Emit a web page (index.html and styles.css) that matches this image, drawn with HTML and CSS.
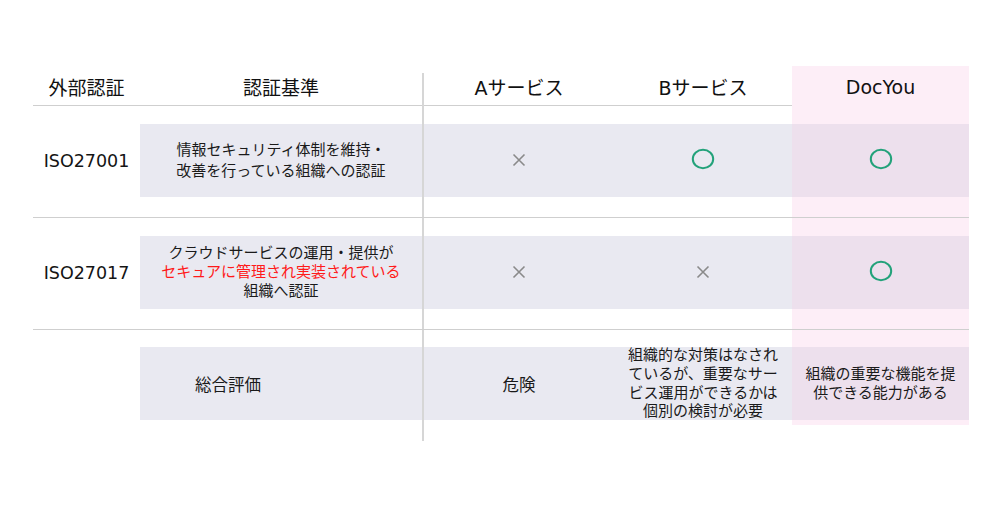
FILE: index.html
```html
<!DOCTYPE html>
<html lang="ja">
<head>
<meta charset="utf-8">
<title>認証比較</title>
<link rel="stylesheet" href="styles.css">
</head>
<body>
<div class="page">
  <div class="table">
    <div class="row head">
      <div class="cell c1"><span>外部認証</span></div>
      <div class="cell c2"><span>認証基準</span></div>
      <div class="cell c3 divider"><span>Aサービス</span></div>
      <div class="cell c4"><span>Bサービス</span></div>
      <div class="cell c5 pink"><span>DocYou</span></div>
    </div>

    <div class="row data">
      <div class="cell c1 iso">ISO27001</div>
      <div class="cell c2"><div class="band"><div class="txt lh21">情報セキュリティ体制を維持・<br>改善を行っている組織への認証</div></div></div>
      <div class="cell c3 divider"><div class="band"><svg class="cross" viewBox="0 0 14 14"><path d="M1.5 1.5 L12.5 12.5 M12.5 1.5 L1.5 12.5"/></svg></div></div>
      <div class="cell c4"><div class="band"><svg class="ok" viewBox="0 0 24 22"><ellipse cx="12" cy="11" rx="10.2" ry="9.2"/></svg></div></div>
      <div class="cell c5 pink"><div class="band mix"><svg class="ok" viewBox="0 0 24 22"><ellipse cx="12" cy="11" rx="10.2" ry="9.2"/></svg></div></div>
    </div>

    <div class="row data">
      <div class="cell c1 iso">ISO27017</div>
      <div class="cell c2"><div class="band"><div class="txt lh19">クラウドサービスの運用・提供が<br><span class="red">セキュアに管理され実装されている</span><br>組織へ認証</div></div></div>
      <div class="cell c3 divider"><div class="band"><svg class="cross" viewBox="0 0 14 14"><path d="M1.5 1.5 L12.5 12.5 M12.5 1.5 L1.5 12.5"/></svg></div></div>
      <div class="cell c4"><div class="band"><svg class="cross" viewBox="0 0 14 14"><path d="M1.5 1.5 L12.5 12.5 M12.5 1.5 L1.5 12.5"/></svg></div></div>
      <div class="cell c5 pink"><div class="band mix"><svg class="ok" viewBox="0 0 24 22"><ellipse cx="12" cy="11" rx="10.2" ry="9.2"/></svg></div></div>
    </div>

    <div class="row last">
      <div class="cell c1"></div>
      <div class="cell c2"><div class="band left"><div class="txt big">総合評価</div></div></div>
      <div class="cell c3 divider"><div class="band"><div class="txt big">危険</div></div></div>
      <div class="cell c4"><div class="band"><div class="txt lh19">組織的な対策はなされ<br>ているが、重要なサー<br>ビス運用ができるかは<br>個別の検討が必要</div></div></div>
      <div class="cell c5 pinktop"><div class="band mix"><div class="txt lh19">組織の重要な機能を提<br>供できる能力がある</div></div></div>
    </div>
  </div>
</div>
</body>
</html>
```

FILE: styles.css
```css
* { box-sizing: border-box; }

html, body {
  margin: 0;
  padding: 0;
  background: #ffffff;
}

body {
  font-family: "DejaVu Sans", "Noto Sans CJK JP", sans-serif;
  color: #1e1e1e;
  width: 1000px;
  height: 511px;
  overflow: hidden;
}

.page {
  padding: 66px 0 0 33px;
}

.table {
  width: 936px;
}

.row {
  display: grid;
  grid-template-columns: 107px 282px 192px 178px 177px;
}

.head {
  height: 40px;
  border-bottom: 1px solid #cfcfcf;
  font-size: 19px;
  color: #111;
}

.head .cell {
  display: flex;
  align-items: center;
  justify-content: center;
  padding-bottom: 5px;
}

.head .divider {
  margin-top: 7px;
  padding-bottom: 12px;
}

.data {
  height: 112px;
  border-bottom: 1px solid #cfcfcf;
}

.data .cell {
  padding: 18px 0 20px;
}

.last {
  height: 111px;
  align-items: start;
}

.last .cell {
  height: 100%;
  padding-top: 17px;
}

.last .pinktop {
  height: auto;
  padding-bottom: 5px;
  background: #fdeef7;
}

.divider {
  border-left: 2px solid #d6d6d6;
}

.pink {
  background: #fdeef7;
}

.iso {
  display: flex;
  align-items: center;
  justify-content: center;
  font-size: 17.5px;
  color: #141414;
  padding-left: 4px;
  padding-bottom: 20px;
}

.band {
  height: 73px;
  background: #e9e9f1;
  display: flex;
  align-items: center;
  justify-content: center;
}

.band.mix {
  background: #ede0ed;
}

.band.left {
  justify-content: flex-start;
  padding-left: 55px;
}

.txt {
  font-size: 15px;
  text-align: center;
  color: #1a1a1a;
  white-space: nowrap;
}

.txt.big {
  font-size: 16.5px;
}

.lh21 { line-height: 21px; }
.lh19 { line-height: 18.7px; }

.red { color: #ff1a1a; }

.cross {
  width: 14px;
  height: 14px;
  margin-bottom: 2px;
  fill: none;
  stroke: #8a8a8a;
  stroke-width: 1.6;
}

.ok {
  width: 24px;
  height: 22px;
  margin-bottom: 4px;
  fill: none;
  stroke: #23a27a;
  stroke-width: 2;
}
```
